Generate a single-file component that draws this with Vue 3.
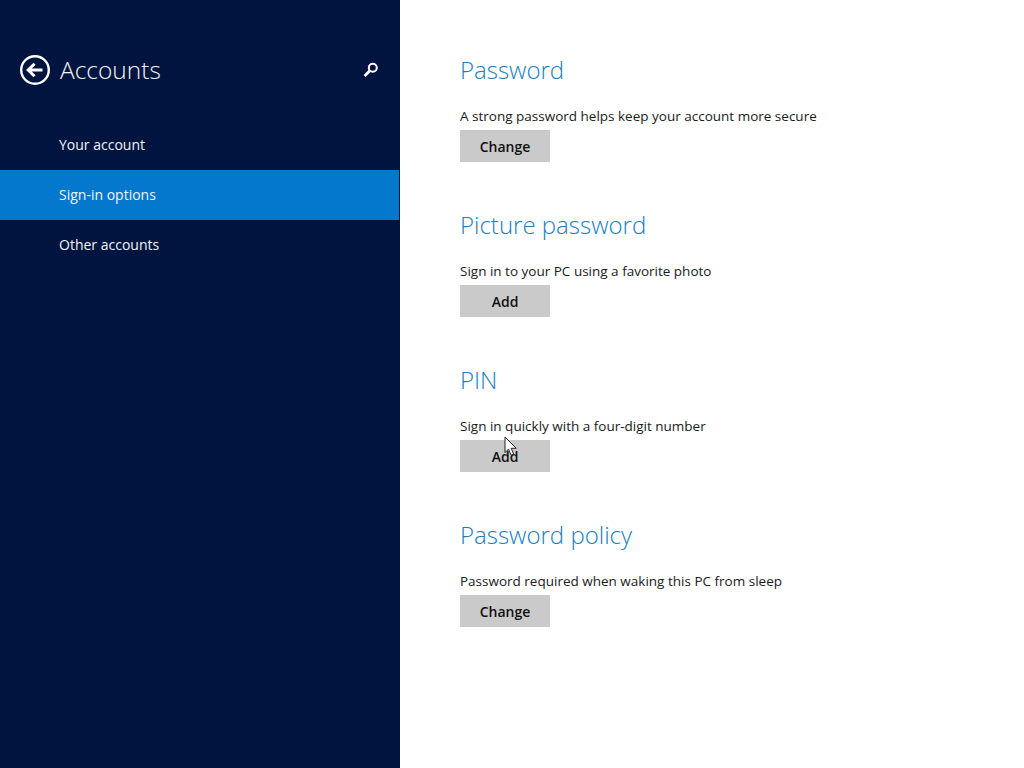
<script setup>
const nav = [
  { label: 'Your account', active: false },
  { label: 'Sign-in options', active: true },
  { label: 'Other accounts', active: false },
]
const sections = [
  { title: 'Password', text: 'A strong password helps keep your account more secure', action: 'Change' },
  { title: 'Picture password', text: 'Sign in to your PC using a favorite photo', action: 'Add' },
  { title: 'PIN', text: 'Sign in quickly with a four-digit number', action: 'Add', cursor: true },
  { title: 'Password policy', text: 'Password required when waking this PC from sleep', action: 'Change' },
]
</script>

<template>
  <div class="screen">
    <aside class="side">
      <header class="head">
        <svg class="back" width="32" height="32" viewBox="0 0 32 32" fill="none" stroke="#fff">
          <circle cx="16" cy="16" r="13.8" stroke-width="2.4" />
          <path d="M23.5 16H9.5M15.5 9.8L9.2 16l6.3 6.2" stroke-width="3" />
        </svg>
        <h1>Accounts</h1>
        <svg class="search" width="18" height="18" viewBox="0 0 18 18" fill="none" stroke="#fff">
          <circle cx="10.8" cy="6.8" r="4" stroke-width="2" />
          <path d="M7.8 9.8L2.6 15" stroke-width="2.8" />
        </svg>
      </header>
      <nav class="nav">
        <div v-for="item in nav" :key="item.label" class="nav-item" :class="{ active: item.active }">{{ item.label }}</div>
      </nav>
    </aside>
    <main class="main">
      <section v-for="s in sections" :key="s.title" class="section">
        <h2>{{ s.title }}</h2>
        <p>{{ s.text }}</p>
        <div class="btn-wrap">
          <button class="btn">{{ s.action }}</button>
          <svg v-if="s.cursor" class="cursor" width="14" height="21" viewBox="0 0 14 21">
            <path d="M1 1v15.5l3.6-3.3 2.5 6 2.6-1.1-2.5-5.8h5z" fill="#fff" stroke="#222" stroke-width="1" />
          </svg>
        </div>
      </section>
    </main>
  </div>
</template>

<style>
html, body { margin: 0; background: #fff; }
</style>

<style scoped>
.screen {
  display: flex;
  width: 1024px;
  height: 768px;
  overflow: hidden;
  font-family: "Open Sans", "Noto Sans", sans-serif;
}
.side {
  width: 400px;
  flex: none;
  background: #001440;
  color: #fff;
}
.head {
  display: flex;
  align-items: center;
  height: 40px;
  padding: 50px 20px 0 19px;
}
.back { flex: none; }
.head h1 {
  flex: 1;
  margin: 0 0 0 9px;
  font-size: 24.5px;
  font-weight: 300;
  line-height: 40px;
  color: #f2f4f8;
}
.search { flex: none; }
.nav { margin-top: 30px; }
.nav-item {
  width: 399px;
  height: 50px;
  box-sizing: border-box;
  padding-left: 59px;
  font-size: 14px;
  line-height: 50px;
  color: #f2f4f8;
}
.nav-item.active { background: #0378cc; }
.main { flex: 1; padding: 50px 0 0 60px; }
.section { height: 155px; }
.section h2 {
  margin: 0;
  height: 40px;
  font-size: 24px;
  font-weight: 300;
  line-height: 40px;
  color: #1780c2;
}
.section p {
  margin: 16px 0 0;
  height: 20px;
  font-size: 13.5px;
  line-height: 20px;
  color: #1a1a1a;
}
.btn-wrap { position: relative; margin-top: 4px; }
.btn {
  display: block;
  width: 90px;
  height: 32px;
  padding: 0;
  border: 0;
  background: #cacaca;
  font-family: inherit;
  font-size: 14px;
  font-weight: 600;
  color: #111;
}
.cursor { position: absolute; left: 44px; top: -4px; }
</style>
